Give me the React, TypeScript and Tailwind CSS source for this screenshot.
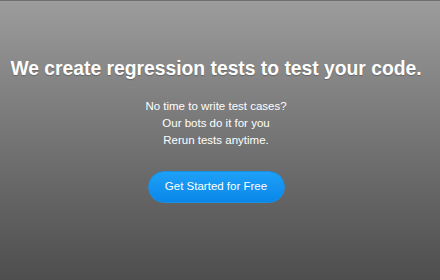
export default function App() {
  return (
    <div
      className="flex h-[280px] w-[440px] flex-col items-center border-t border-[#6f6f6f] bg-gradient-to-b from-[#9c9c9c] to-[#4e4e4e] pr-2 text-white"
      style={{ fontFamily: '"Liberation Sans", Arial, sans-serif' }}
    >
      {/* Hero */}
      <h1 className="mt-[56px] text-[19.3px] font-bold leading-[24px] [text-shadow:0_1px_1px_rgba(0,0,0,0.25)]">
        We create regression tests to test your code.
      </h1>
      <div className="mt-[17px] text-center text-[11.5px] leading-[17px]">
        <p>No time to write test cases?</p>
        <p>Our bots do it for you</p>
        <p>Rerun tests anytime.</p>
      </div>
      <button className="mt-[22px] h-[32px] w-[137px] rounded-full border border-[#1b8fe0] bg-gradient-to-b from-[#1da0f7] to-[#0a87ea] text-[11.5px] text-white">
        Get Started for Free
      </button>
    </div>
  );
}
